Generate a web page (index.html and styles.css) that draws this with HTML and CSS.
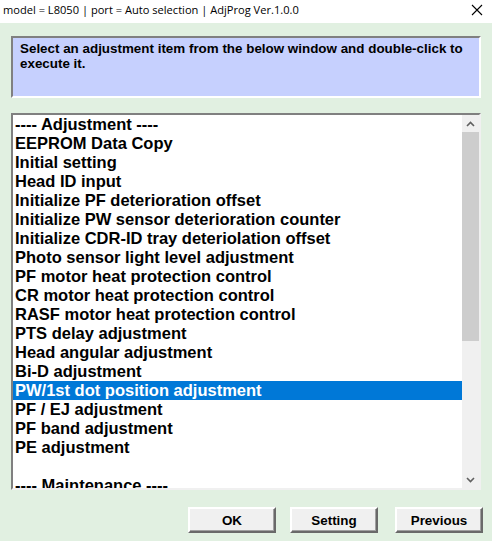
FILE: index.html
```html
<!DOCTYPE html>
<html>
<head>
<meta charset="utf-8">
<link rel="stylesheet" href="styles.css">
</head>
<body>
<div class="window">
  <div class="titlebar">
    <span class="title">model = L8050 | port = Auto selection | AdjProg Ver.1.0.0</span>
    <svg class="close" width="12" height="12" viewBox="0 0 12 12"><path d="M1 1L11 11M11 1L1 11" stroke="#000" stroke-width="1.1" fill="none"/></svg>
  </div>
  <div class="client">
    <div class="info">Select an adjustment item from the below window and double-click to execute it.</div>
    <div class="listbox">
      <div class="items">
        <div class="item">---- Adjustment ----</div>
        <div class="item">EEPROM Data Copy</div>
        <div class="item">Initial setting</div>
        <div class="item">Head ID input</div>
        <div class="item">Initialize PF deterioration offset</div>
        <div class="item">Initialize PW sensor deterioration counter</div>
        <div class="item">Initialize CDR-ID tray deteriolation offset</div>
        <div class="item">Photo sensor light level adjustment</div>
        <div class="item">PF motor heat protection control</div>
        <div class="item">CR motor heat protection control</div>
        <div class="item">RASF motor heat protection control</div>
        <div class="item">PTS delay adjustment</div>
        <div class="item">Head angular adjustment</div>
        <div class="item">Bi-D adjustment</div>
        <div class="item selected">PW/1st dot position adjustment</div>
        <div class="item">PF / EJ adjustment</div>
        <div class="item">PF band adjustment</div>
        <div class="item">PE adjustment</div>
        <div class="item">&nbsp;</div>
        <div class="item">---- Maintenance ----</div>
      </div>
      <div class="scrollbar">
        <div class="sb-btn"><svg width="9" height="6" viewBox="0 0 9 6"><path d="M1 5L4.5 1.5L8 5" stroke="#606060" stroke-width="1.6" fill="none"/></svg></div>
        <div class="sb-track"><div class="sb-thumb"></div></div>
        <div class="sb-btn"><svg width="9" height="6" viewBox="0 0 9 6"><path d="M1 1L4.5 4.5L8 1" stroke="#606060" stroke-width="1.6" fill="none"/></svg></div>
      </div>
    </div>
    <div class="buttons">
      <button class="btn">OK</button>
      <button class="btn">Setting</button>
      <button class="btn btn-prev">Previous</button>
    </div>
  </div>
</div>
</body>
</html>
```

FILE: styles.css
```css
* {
  box-sizing: border-box;
}
html, body {
  margin: 0;
  padding: 0;
  width: 492px;
  height: 541px;
  overflow: hidden;
  background: #e1f0e1;
}
.window {
  display: flex;
  flex-direction: column;
  height: 541px;
}
.titlebar {
  height: 23px;
  background: #ffffff;
  display: flex;
  align-items: center;
  justify-content: space-between;
  padding: 0 9px 0 3px;
  flex: none;
}
.title {
  font-family: "Open Sans", "Noto Sans", sans-serif;
  font-size: 11.1px;
  color: #000;
  position: relative;
  top: -2px;
}
.close {
  position: relative;
  top: -2px;
}
.client {
  flex: 1;
  display: flex;
  flex-direction: column;
  padding: 13px 11px 0 11px;
}
.info {
  height: 62px;
  background: #c6d0fe;
  border-style: solid;
  border-width: 2px;
  border-color: #808080 #ffffff #ffffff #808080;
  font-family: "Liberation Sans", Arial, sans-serif;
  font-weight: bold;
  font-size: 13.4px;
  line-height: 15px;
  color: #000;
  padding: 3px 14px 0 7px;
}
.listbox {
  margin-top: 15px;
  height: 377px;
  display: flex;
  background: #ffffff;
  border-style: solid;
  border-width: 2px;
  border-color: #808080 #f0f0f0 #f0f0f0 #808080;
  overflow: hidden;
}
.items {
  flex: 1;
  overflow: hidden;
}
.item {
  height: 19px;
  line-height: 19px;
  font-family: "Liberation Sans", Arial, sans-serif;
  font-weight: bold;
  font-size: 16.5px;
  color: #000;
  padding-left: 2px;
  white-space: nowrap;
}
.item.selected {
  background: #0078d7;
  color: #ffffff;
}
.scrollbar {
  width: 17px;
  flex: none;
  display: flex;
  flex-direction: column;
  background: #f0f0f0;
}
.sb-btn {
  height: 17px;
  display: flex;
  align-items: center;
  justify-content: center;
  flex: none;
}
.sb-track {
  flex: 1;
}
.sb-thumb {
  height: 209px;
  background: #cdcdcd;
}
.buttons {
  display: flex;
  justify-content: flex-end;
  gap: 14px;
  margin-top: 17px;
  margin-right: -2px;
}
.btn {
  width: 88px;
  height: 26px;
  background: #f0f0f0;
  border-style: solid;
  border-width: 2px;
  border-color: #ffffff #696969 #696969 #ffffff;
  box-shadow: inset -1px -1px 0 #a0a0a0;
  font-family: "Liberation Sans", Arial, sans-serif;
  font-weight: bold;
  font-size: 13.4px;
  color: #000;
  padding: 0;
}
.btn-prev {
  margin-left: 3px;
}
```
